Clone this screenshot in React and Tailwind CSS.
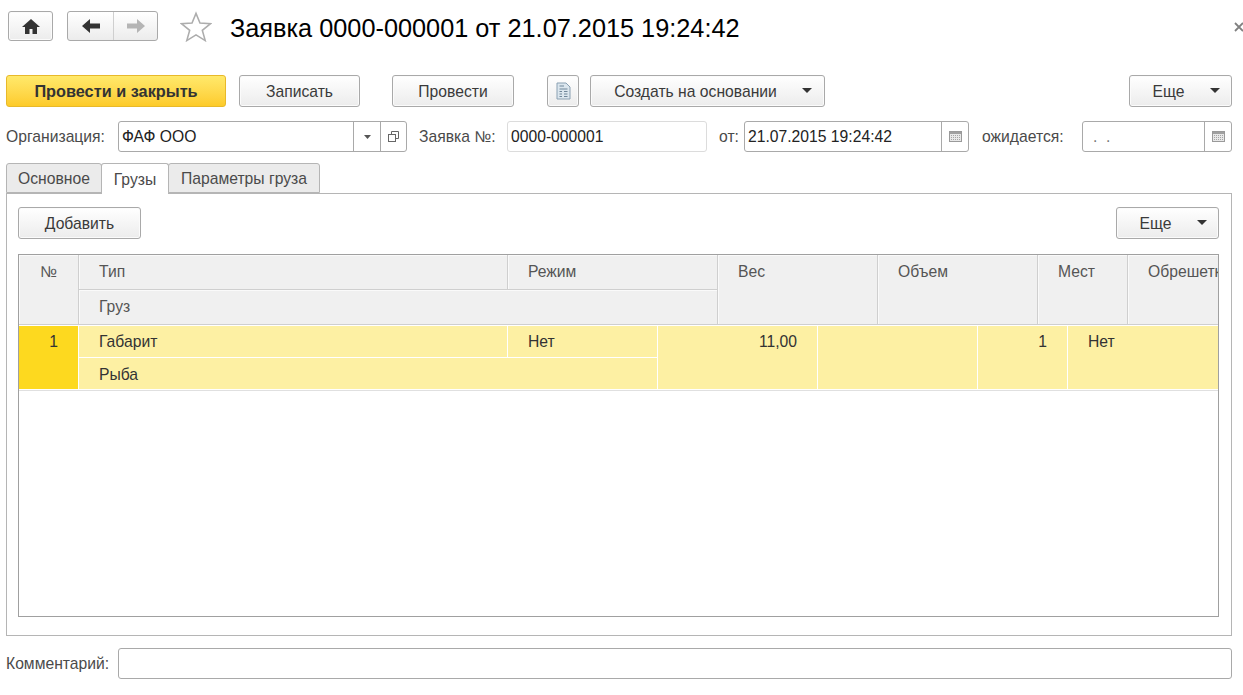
import React from 'react';

const btn = 'flex items-center justify-center h-[32px] pt-px rounded-[3px] border border-[#a9a9a9] bg-gradient-to-b from-white to-[#ececec] text-[15.7px] text-[#3a3a3a] shadow-[inset_0_0_0_1px_#fbfbfb]';
const field = 'flex items-stretch h-[31px] rounded-[3px] border border-[#a9a9a9] bg-white text-[15.7px] text-[#222]';
const label = 'text-[15.7px] text-[#4a4a4a] whitespace-nowrap';

function Caret() {
  return (
    <svg width="10" height="5" viewBox="0 0 10 5">
      <path d="M0 0H10L5 5Z" fill="#333" />
    </svg>
  );
}

function CalendarIcon() {
  return (
    <svg width="13" height="11" viewBox="0 0 13 11">
      <rect x="0.5" y="0.5" width="12" height="10" fill="#e8e8e8" stroke="#9a9a9a" />
      <rect x="1" y="1" width="11" height="2" fill="#a0a0a0" />
      <path d="M2 4.5H11M2 6.5H11M2 8.5H11" stroke="#a5a5a5" strokeDasharray="1 1" />
    </svg>
  );
}

function DateField({ value, className }) {
  return (
    <div className={`${field} ${className}`}>
      <div className="flex-1 flex items-center pl-[3px]">{value}</div>
      <div className="w-[27px] border-l border-[#a9a9a9] flex items-center justify-center">
        <CalendarIcon />
      </div>
    </div>
  );
}

function HeadCell({ className, children }) {
  return (
    <div className={`bg-[#f0f0f0] border-r border-b border-[#cfcfcf] shadow-[inset_1px_1px_0_#fafafa] pl-[20px] pt-[7px] text-[15.7px] leading-[20px] text-[#555] whitespace-nowrap overflow-hidden ${className}`}>
      {children}
    </div>
  );
}

function BodyCell({ className, children }) {
  return (
    <div className={`bg-[#fdf0a3] border-r border-b border-white pt-[6px] text-[15.7px] leading-[20px] text-[#333] whitespace-nowrap overflow-hidden ${className}`}>
      {children}
    </div>
  );
}

export default function App() {
  return (
    <div className="w-[1243px] h-[695px] bg-white overflow-hidden font-['Liberation_Sans',Arial,sans-serif] pl-[6px] pr-[11px]">
      {/* Header */}
      <div className="relative flex items-center h-[30px] mt-[11px] pl-[2px]">
        <div className={`${btn} w-[45px] !h-[30px] !pt-0`}>
          <svg width="18" height="15" viewBox="0 0 18 15">
            <path d="M9 0L18 8H15V15H10.5V10H7.5V15H3V8H0Z" fill="#333" />
          </svg>
        </div>
        <div className="flex ml-[14px] h-[30px] w-[91px] rounded-[3px] border border-[#a9a9a9] bg-gradient-to-b from-white to-[#ececec]">
          <div className="w-[46px] border-r border-[#cfcfcf] flex items-center justify-center">
            <svg width="18" height="14" viewBox="0 0 18 14">
              <path d="M0 7L8 0V4.5H18V9.5H8V14Z" fill="#333" />
            </svg>
          </div>
          <div className="flex-1 flex items-center justify-center">
            <svg width="18" height="14" viewBox="0 0 18 14">
              <path d="M18 7L10 0V4.5H0V9.5H10V14Z" fill="#b5b5b5" />
            </svg>
          </div>
        </div>
        <svg className="ml-[22px]" width="32" height="31" viewBox="0 0 33 31">
          <path d="M16.5 2L20.6 12L31.5 12.6L23 19.4L26 30L16.5 24.2L7 30L10 19.4L1.5 12.6L12.4 12Z" fill="white" stroke="#adadad" strokeWidth="1.6" />
        </svg>
        <h1 className="ml-[18px] mt-[6px] text-[25.3px] font-normal text-black whitespace-nowrap">Заявка 0000-000001 от 21.07.2015 19:24:42</h1>
        <svg className="absolute left-[1228px] top-[11px]" width="10" height="10" viewBox="0 0 10 10">
          <path d="M1 1L9 9M9 1L1 9" stroke="#808080" strokeWidth="1.8" />
        </svg>
      </div>

      {/* Command bar */}
      <div className="flex items-center mt-[34px]">
        <div className="flex items-center justify-center w-[220px] h-[32px] rounded-[3px] border border-[#e8b92a] bg-gradient-to-b from-[#ffe96a] to-[#fdcb28] text-[16.3px] font-bold text-[#333]">
          Провести и закрыть
        </div>
        <div className={`${btn} w-[121px] ml-[13px]`}>Записать</div>
        <div className={`${btn} w-[122px] ml-[32px]`}>Провести</div>
        <div className={`${btn} w-[32px] ml-[33px] !pt-0`}>
          <svg width="15" height="18" viewBox="0 0 15 18">
            <path d="M1 1H10L14 5V17H1Z" fill="#dbe6ee" stroke="#8aa0b2" />
            <path d="M3.5 4H8M3.5 7H11.5M3.5 9.5H6M8 9.5H11.5M3.5 12H6M8 12H11.5M3.5 14.5H6M8 14.5H11.5" stroke="#6f8699" />
          </svg>
        </div>
        <div className={`${btn} w-[235px] ml-[11px] relative pr-[24px]`}>
          Создать на основании
          <span className="absolute right-[12px] top-[12px] flex"><Caret /></span>
        </div>
        <div className={`${btn} w-[103px] ml-auto relative pr-[24px]`}>
          Еще
          <span className="absolute right-[11px] top-[12px] flex"><Caret /></span>
        </div>
      </div>

      {/* Fields */}
      <div className="flex items-center mt-[14px]">
        <div className={`${label} w-[112px]`}>Организация:</div>
        <div className={`${field} w-[289px]`}>
          <div className="flex-1 flex items-center pl-[3px]">ФАФ ООО</div>
          <div className="w-[27px] border-l border-[#a9a9a9] flex items-center justify-center">
            <svg width="7" height="4" viewBox="0 0 7 4"><path d="M0 0H7L3.5 4Z" fill="#555" /></svg>
          </div>
          <div className="w-[26px] border-l border-[#a9a9a9] flex items-center justify-center">
            <svg width="11" height="11" viewBox="0 0 11 11">
              <path d="M3.5 3.5V0.5H10.5V7.5H7.5" fill="none" stroke="#666" />
              <rect x="0.5" y="3.5" width="7" height="7" fill="white" stroke="#666" />
            </svg>
          </div>
        </div>
        <div className={`${label} ml-[12px] w-[88px]`}>Заявка №:</div>
        <div className={`${field} !border-[#dcdcdc] w-[200px] !items-center pl-[3px]`}>0000-000001</div>
        <div className={`${label} ml-[12px] w-[25px]`}>от:</div>
        <DateField value="21.07.2015 19:24:42" className="w-[225px]" />
        <div className={`${label} ml-[13px] w-[100px]`}>ожидается:</div>
        <DateField value={<span className="pl-[7px] text-[#777]">.&nbsp;&nbsp;.</span>} className="w-[150px]" />
      </div>

      {/* Tabs */}
      <div className="flex mt-[11px] h-[31px] text-[15.7px] text-[#4a4a4a] relative z-10">
        <div className="w-[96px] h-[30px] pt-px flex items-center justify-center bg-[#ebebeb] border border-[#b5b5b5] rounded-t-[3px]">Основное</div>
        <div className="w-[68px] h-[31px] pt-px -ml-px flex items-center justify-center bg-white border border-b-0 border-[#b5b5b5] rounded-t-[3px]">Грузы</div>
        <div className="w-[152px] h-[30px] pt-px -ml-px flex items-center justify-center bg-[#ebebeb] border border-[#b5b5b5] rounded-t-[3px]">Параметры груза</div>
      </div>

      {/* Panel */}
      <div className="h-[443px] -mt-px border border-[#b5b5b5] pt-[13px] pl-[11px] pr-[12px]">
        <div className="flex justify-between">
          <div className={`${btn} w-[123px]`}>Добавить</div>
          <div className={`${btn} w-[103px] relative pr-[24px]`}>
            Еще
            <span className="absolute right-[11px] top-[12px] flex"><Caret /></span>
          </div>
        </div>

        <div className="h-[363px] mt-[15px] border border-[#a0a0a0] bg-white overflow-hidden">
          <div className="grid grid-cols-[60px_429px_210px_160px_160px_90px_1fr] grid-rows-[35px_35px] border-b border-white">
            <HeadCell className="row-span-2 !pl-0 text-center">№</HeadCell>
            <HeadCell>Тип</HeadCell>
            <HeadCell>Режим</HeadCell>
            <HeadCell className="row-span-2">Вес</HeadCell>
            <HeadCell className="row-span-2">Объем</HeadCell>
            <HeadCell className="row-span-2">Мест</HeadCell>
            <HeadCell className="row-span-2 !border-r-0">Обрешетка</HeadCell>
            <HeadCell className="col-span-2">Груз</HeadCell>
          </div>
          <div className="grid grid-cols-[60px_429px_150px_160px_160px_90px_1fr] grid-rows-[32px_32px] border-b border-[#e0e0e0]">
            <BodyCell className="row-span-2 !bg-[#fdd91f] text-right pr-[20px]">1</BodyCell>
            <BodyCell className="pl-[20px]">Габарит</BodyCell>
            <BodyCell className="pl-[20px]">Нет</BodyCell>
            <BodyCell className="row-span-2 text-right pr-[20px]">11,00</BodyCell>
            <BodyCell className="row-span-2" />
            <BodyCell className="row-span-2 text-right pr-[20px]">1</BodyCell>
            <BodyCell className="row-span-2 pl-[20px] !border-r-0">Нет</BodyCell>
            <BodyCell className="col-span-2 pl-[20px] !pt-[7px]">Рыба</BodyCell>
          </div>
        </div>
      </div>

      {/* Comment */}
      <div className="flex items-center mt-[12px]">
        <div className={`${label} w-[112px]`}>Комментарий:</div>
        <div className={`${field} flex-1`} />
      </div>
    </div>
  );
}
